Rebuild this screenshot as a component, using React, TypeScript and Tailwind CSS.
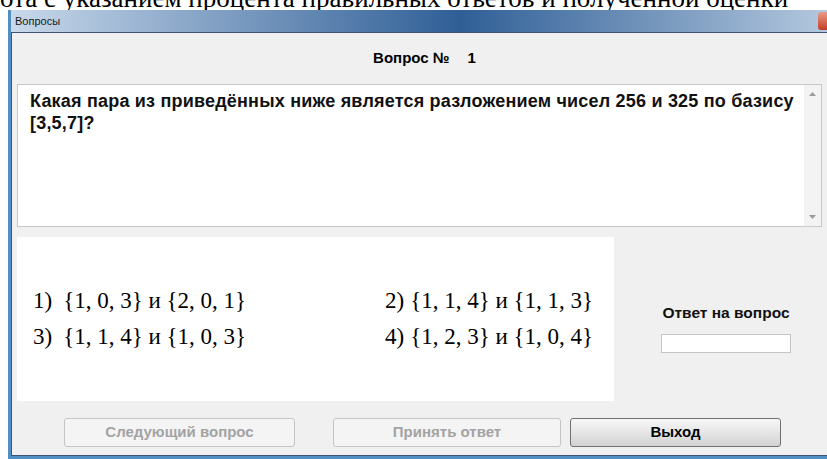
import React from 'react';

const answers = [
  { n: '1)', text: '{1, 0, 3} и {2, 0, 1}' },
  { n: '2)', text: '{1, 1, 4} и {1, 1, 3}' },
  { n: '3)', text: '{1, 1, 4} и {1, 0, 3}' },
  { n: '4)', text: '{1, 2, 3} и {1, 0, 4}' },
];

function ScrollArrow({ up }: { up?: boolean }) {
  return (
    <svg width="7" height="4" viewBox="0 0 7 4" className="fill-[#9a9a9a]">
      {up ? <path d="M0 4 L3.5 0 L7 4 Z" /> : <path d="M0 0 L7 0 L3.5 4 Z" />}
    </svg>
  );
}

function WinButton({ label, disabled, className }: { label: string; disabled?: boolean; className?: string }) {
  return (
    <button
      className={`h-[29px] rounded-[3px] border text-[15px] font-bold ${
        disabled
          ? 'border-[#c4c4c4] bg-[#f4f4f4] text-[#a3a3a3]'
          : 'border-[#707070] bg-gradient-to-b from-[#f6f6f6] via-[#e6e6e6] to-[#d2d2d2] text-black'
      } ${className ?? ''}`}
    >
      {label}
    </button>
  );
}

export default function App() {
  return (
    <div className="w-[827px] h-[459px] overflow-hidden bg-white font-['Liberation_Sans',Arial,sans-serif]">
      {/* tail of the document line above the window */}
      <div className="h-[10px] overflow-hidden">
        <div className="-mt-[17px] whitespace-nowrap font-['Liberation_Serif',serif] text-[27px] leading-[30px] text-black">
          ота с указанием процента правильных ответов и полученной оценки
        </div>
      </div>

      <div className="ml-[8px] flex h-[449px] flex-col border-l-[3px] border-b-[3px] border-[#4f8fc4]">
        {/* title bar */}
        <div className="flex h-[22px] items-center justify-between bg-gradient-to-r from-[#c9d9ea] via-[#2f5f96] via-55% to-[#b4c8de] pl-[4px]">
          <span className="text-[11px] text-[#1a1a1a]">Вопросы</span>
          <div className="h-[18px] w-[9px] rounded-l-[3px] bg-gradient-to-b from-[#e89a88] to-[#c23a22]" />
        </div>

        <div className="flex flex-1 flex-col border-l border-t border-b border-[#3b5478] bg-[#f0f0f0] pl-[5px] pr-[5px]">
          <div className="flex h-[51px] items-center justify-center gap-[18px] pl-[10px] text-[15px] font-bold text-black">
            <span>Вопрос №</span>
            <span>1</span>
          </div>

          {/* question text box */}
          <div className="flex h-[143px] border border-[#c8c8c8] bg-white">
            <div className="flex-1 pl-[12px] pt-[5px] text-[18px] font-bold leading-[22px] tracking-[0.2px] text-[#111]">
              Какая пара из приведённых ниже является разложением чисел 256 и 325 по базису [3,5,7]?
            </div>
            <div className="flex w-[17px] flex-col items-center justify-between bg-[#f3f3f3] py-[7px]">
              <ScrollArrow up />
              <ScrollArrow />
            </div>
          </div>

          <div className="mt-[10px] flex">
            {/* answer variants */}
            <div className="grid h-[164px] w-[597px] grid-cols-[352px_1fr] content-center gap-y-[8px] bg-white pl-[16px] font-['Liberation_Serif',serif] text-[23px] leading-[28px] text-black">
              {answers.map((a, i) => (
                <div key={a.n} className={`flex ${i % 2 ? 'gap-[6px]' : 'gap-[11px]'}`}>
                  <span>{a.n}</span>
                  <span>{a.text}</span>
                </div>
              ))}
            </div>

            <div className="flex flex-1 flex-col items-center pt-[64px] pl-[16px]">
              <span className="text-[15.5px] font-bold text-[#111]">Ответ на вопрос</span>
              <div className="mt-[10px] h-[19px] w-[130px] border border-[#c6c6c6] bg-white" />
            </div>
          </div>

          <div className="mt-[17px] flex pl-[47px]">
            <WinButton label="Следующий вопрос" disabled className="w-[231px]" />
            <WinButton label="Принять ответ" disabled className="ml-[38px] w-[228px]" />
            <WinButton label="Выход" className="ml-[9px] w-[211px]" />
          </div>
        </div>
      </div>
    </div>
  );
}
